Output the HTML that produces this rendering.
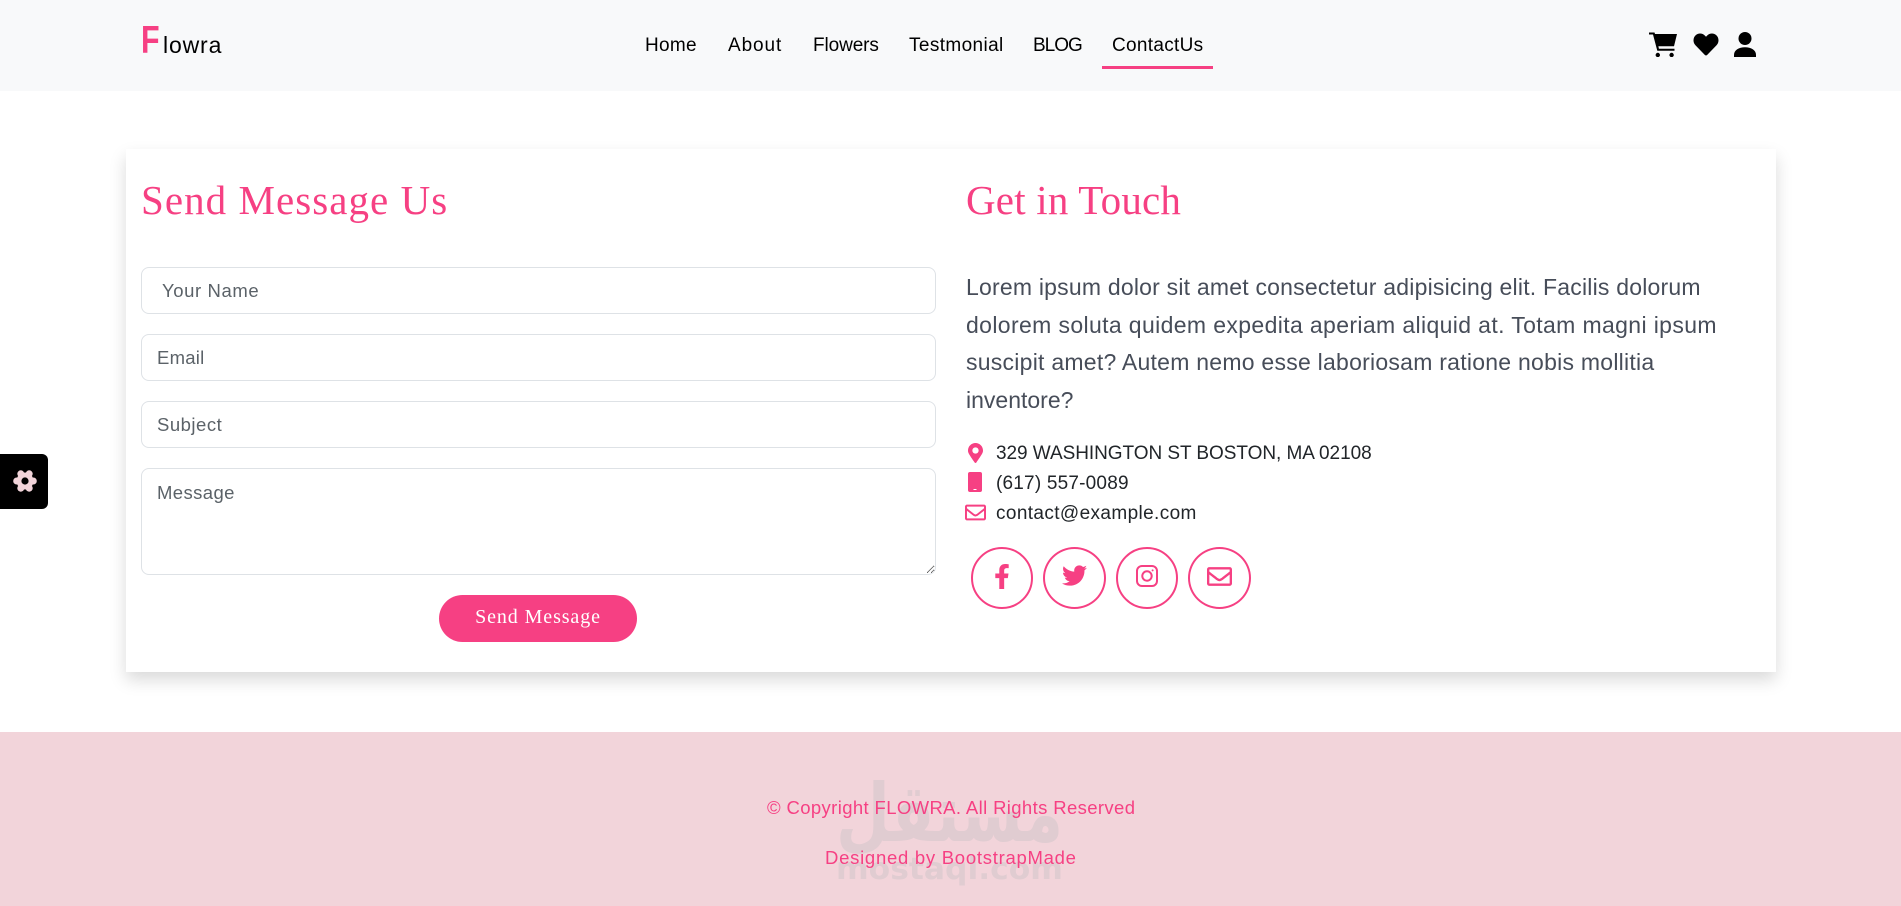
<!DOCTYPE html>
<html lang="en"><head><meta charset="utf-8"><title>Flowra - Contact</title>
<style>
html,body{margin:0;padding:0;background:#fff}
body{position:relative;width:1901px;height:906px;overflow:hidden;font-family:"Liberation Sans",sans-serif;color:#000}
.t{position:absolute;white-space:nowrap}
.abs{position:absolute}
header{position:absolute;left:0;top:0;width:1901px;height:91px;background:#f8f9fa}
.nav{font-size:19px;line-height:24px;top:34px;color:#000}
.card{position:absolute;left:126px;top:149px;width:1650px;height:523px;background:#fff;box-shadow:0 8px 16px rgba(0,0,0,.15)}
h2{margin:0;font-family:"Liberation Serif",serif;font-weight:400;color:#f64083;font-size:41px;line-height:50px}
.f{position:absolute;left:141px;width:795px;box-sizing:border-box;border:1px solid #dee2e6;border-radius:8px;background:#fff;font-family:"Liberation Sans",sans-serif;font-size:18.5px;padding:0 15px;margin:0;outline:0}
.f::placeholder{color:#5b6268;opacity:1}
.p{font-size:23px;line-height:24px;color:#474d59;left:966px}
.c{font-size:19px;line-height:24px;color:#212529;left:996px}
.s{position:absolute;top:547px;width:62px;height:62px;box-sizing:border-box;border:2px solid #f64083;border-radius:50%}
footer{position:absolute;left:0;top:732px;width:1901px;height:174px;background:#f2d4da}
.ft{font-size:18.5px;line-height:24px;color:#f64083}
</style></head>
<body>
<header>
  <span class="t" style="left:141px;top:18px;font-size:39px;line-height:46px;color:#f64083;font-weight:700;transform-origin:left;transform:scaleX(.78)">F</span>
  <span class="t" style="left:163px;top:30px;font-size:23px;line-height:30px;letter-spacing:.85px;">lowra</span>
  <nav>
    <a class="t nav" style="left:645px;letter-spacing:.3px">Home</a>
    <a class="t nav" style="left:728px;letter-spacing:.9px">About</a>
    <a class="t nav" style="left:813px;letter-spacing:-.1px">Flowers</a>
    <a class="t nav" style="left:909px;letter-spacing:.38px">Testmonial</a>
    <a class="t nav" style="left:1033px;letter-spacing:-1px">BLOG</a>
    <a class="t nav" style="left:1112px;letter-spacing:.3px">ContactUs</a>
  </nav>
  <div class="abs" style="left:1102px;top:66px;width:111px;height:3px;background:#f64083"></div>
  <svg class="abs" style="left:1649px;top:32px" width="28" height="25" viewBox="0 0 28 25"><path d="M0 .5H5.5L6 2H28L25 14.3H9.4L9.9 16.7H25.5V18.7H8.3L4 2.5H0Z"/><circle cx="8.8" cy="23" r="2.2"/><circle cx="22.6" cy="23" r="2.2"/></svg>
  <svg class="abs" style="left:1693px;top:32px" width="26" height="25" viewBox="0 0 512 512"><path d="M462.3 62.6C407.5 15.9 326 24.3 275.7 76.2L256 96.5l-19.7-20.3C186.1 24.3 104.5 15.9 49.7 62.6c-62.8 53.6-66.1 149.8-9.9 207.9l193.5 199.8c12.5 12.9 32.8 12.9 45.3 0l193.5-199.8c56.3-58.1 53-154.3-9.8-207.9z"/></svg>
  <svg class="abs" style="left:1734px;top:32px" width="22" height="25" viewBox="0 0 22 25"><circle cx="11" cy="6.5" r="6.5"/><path d="M0 25V23C0 18 5 15.3 11 15.3S22 18 22 23V25Z"/></svg>
</header>

<div class="abs" style="left:0;top:454px;width:48px;height:55px;background:#000;border-radius:0 6px 6px 0">
  <svg class="abs" style="left:13px;top:15px" width="24" height="24" viewBox="0 0 24 24"><g fill="#f2d4da"><circle cx="12" cy="12" r="8.5"/><circle cx="20.3" cy="12" r="3.5"/><circle cx="3.7" cy="12" r="3.5"/><circle cx="16.2" cy="4.8" r="3.5"/><circle cx="7.8" cy="4.8" r="3.5"/><circle cx="16.2" cy="19.2" r="3.5"/><circle cx="7.8" cy="19.2" r="3.5"/></g><circle cx="12" cy="12" r="3.6" fill="#000"/></svg>
</div>

<div class="card"></div>
<h2 class="t" style="left:141px;top:175px;letter-spacing:1.05px">Send Message Us</h2>
<h2 class="t" style="left:966px;top:175px;letter-spacing:.2px">Get in Touch</h2>

<input class="f" style="top:267px;height:47px;padding-left:20px;letter-spacing:.6px" placeholder="Your Name">
<input class="f" style="top:334px;height:47px;letter-spacing:.25px" placeholder="Email">
<input class="f" style="top:401px;height:47px;letter-spacing:.5px" placeholder="Subject">
<textarea class="f" style="top:468px;height:107px;padding-top:12px;line-height:24px;letter-spacing:.4px" placeholder="Message"></textarea>
<div class="abs" style="left:439px;top:595px;width:198px;height:47px;border-radius:24px;background:#f64083;color:#fff;font-family:'Liberation Serif',serif;font-size:20px;line-height:44px;text-align:center;letter-spacing:.9px">Send Message</div>

<div class="t p" style="top:275px;letter-spacing:.21px">Lorem ipsum dolor sit amet consectetur adipisicing elit. Facilis dolorum</div>
<div class="t p" style="top:313px;letter-spacing:.37px">dolorem soluta quidem expedita aperiam aliquid at. Totam magni ipsum</div>
<div class="t p" style="top:350px;letter-spacing:.25px">suscipit amet? Autem nemo esse laboriosam ratione nobis mollitia</div>
<div class="t p" style="top:388px">inventore?</div>

<svg class="abs" style="left:968px;top:443px" width="15" height="20" viewBox="0 0 384 512"><path fill="#f64083" d="M172.268 501.67C26.97 291.031 0 255.406 0 192 0 85.961 85.961 0 192 0s192 85.961 192 192c0 63.406-26.97 99.031-172.268 309.67-9.535 13.774-29.93 13.773-39.464 0zM192 272c44.183 0 80-35.817 80-80s-35.817-80-80-80-80 35.817-80 80 35.817 80 80 80z"/></svg>
<svg class="abs" style="left:968px;top:472px" width="14" height="20" viewBox="0 0 14 20"><rect width="14" height="20" rx="2" fill="#f64083"/><rect x="5.5" y="17" width="3" height="1" fill="#fff"/></svg>
<svg class="abs" style="left:965px;top:502px" width="21" height="21" viewBox="0 0 512 512"><path fill="#f64083" d="M464 64H48C21.49 64 0 85.49 0 112v288c0 26.51 21.49 48 48 48h416c26.51 0 48-21.49 48-48V112c0-26.51-21.49-48-48-48zm0 48v40.805c-22.422 18.259-58.168 46.651-134.587 106.49-16.841 13.247-50.201 45.072-73.413 44.701-23.208.375-56.579-31.459-73.413-44.701C106.18 199.465 70.425 171.067 48 152.805V112h416zM48 400V214.398c22.914 18.251 55.409 43.862 104.938 82.646 21.857 17.205 60.134 55.186 103.062 54.955 42.717.231 80.509-37.199 103.053-54.947 49.528-38.783 82.032-64.401 104.947-82.653V400H48z"/></svg>

<div class="t c" style="top:442px;letter-spacing:-.05px">329 WASHINGTON ST BOSTON, MA 02108</div>
<div class="t c" style="top:472px;letter-spacing:.2px">(617) 557-0089</div>
<div class="t c" style="top:502px;letter-spacing:.38px">contact@example.com</div>

<div class="s" style="left:971px"><svg class="abs" style="left:19px;top:15px" width="20" height="25" viewBox="0 0 320 512"><path fill="#f64083" d="M279.14 288l14.22-92.66h-88.91v-60.13c0-25.35 12.42-50.06 52.24-50.06h40.42V6.26S260.43 0 225.36 0c-73.22 0-121.08 44.38-121.08 124.72v70.62H22.89V288h81.39v224h100.17V288z"/></svg></div>
<div class="s" style="left:1043px;width:63px"><svg class="abs" style="left:17px;top:14px" width="25" height="25" viewBox="0 0 512 512"><path fill="#f64083" d="M459.37 151.716c.325 4.548.325 9.097.325 13.645 0 138.72-105.583 298.558-298.558 298.558-59.452 0-114.68-17.219-161.137-47.106 8.447.974 16.568 1.299 25.34 1.299 49.055 0 94.213-16.568 130.274-44.832-46.132-.975-84.792-31.188-98.112-72.772 6.498.974 12.995 1.624 19.818 1.624 9.421 0 18.843-1.3 27.614-3.573-48.081-9.747-84.143-51.98-84.143-102.985v-1.299c13.969 7.797 30.214 12.67 47.431 13.319-28.264-18.843-46.781-51.005-46.781-87.391 0-19.492 5.197-37.36 14.294-52.954 51.655 63.675 129.3 105.258 216.365 109.807-1.624-7.797-2.599-15.918-2.599-24.04 0-57.828 46.782-104.934 104.934-104.934 30.213 0 57.502 12.67 76.67 33.137 23.715-4.548 46.456-13.32 66.599-25.34-7.798 24.366-24.366 44.833-46.132 57.827 21.117-2.273 41.584-8.122 60.426-16.243-14.292 20.791-32.161 39.308-52.628 54.253z"/></svg></div>
<div class="s" style="left:1116px"><svg class="abs" style="left:18px;top:16px" width="22" height="22" viewBox="0 0 22 22" fill="none" stroke="#f64083" stroke-width="2"><rect x="1" y="1" width="20" height="20" rx="5"/><circle cx="11" cy="11" r="4.7"/><circle cx="16.6" cy="5.4" r="1" fill="#f64083" stroke="none"/></svg></div>
<div class="s" style="left:1188px;width:63px"><svg class="abs" style="left:17px;top:15px" width="25" height="25" viewBox="0 0 512 512"><path fill="#f64083" d="M464 64H48C21.49 64 0 85.49 0 112v288c0 26.51 21.49 48 48 48h416c26.51 0 48-21.49 48-48V112c0-26.51-21.49-48-48-48zm0 48v40.805c-22.422 18.259-58.168 46.651-134.587 106.49-16.841 13.247-50.201 45.072-73.413 44.701-23.208.375-56.579-31.459-73.413-44.701C106.18 199.465 70.425 171.067 48 152.805V112h416zM48 400V214.398c22.914 18.251 55.409 43.862 104.938 82.646 21.857 17.205 60.134 55.186 103.062 54.955 42.717.231 80.509-37.199 103.053-54.947 49.528-38.783 82.032-64.401 104.947-82.653V400H48z"/></svg></div>

<footer>
  <svg class="abs" style="left:820px;top:40px" width="260" height="125" viewBox="0 0 260 125">
    <text x="16" y="69" font-family="'DejaVu Sans',sans-serif" font-size="80" font-weight="700" fill="#e0ccd1" textLength="227" lengthAdjust="spacingAndGlyphs">مستقل</text>
    <text x="16" y="107" font-family="'DejaVu Sans',sans-serif" font-size="30" font-weight="700" fill="#e0ccd1" textLength="227" lengthAdjust="spacingAndGlyphs">mostaql.com</text>
  </svg>
  <div class="t ft" style="left:767px;top:64px;letter-spacing:.37px">© Copyright FLOWRA. All Rights Reserved</div>
  <div class="t ft" style="left:825px;top:114px;letter-spacing:.73px">Designed by BootstrapMade</div>
</footer>
</body></html>
